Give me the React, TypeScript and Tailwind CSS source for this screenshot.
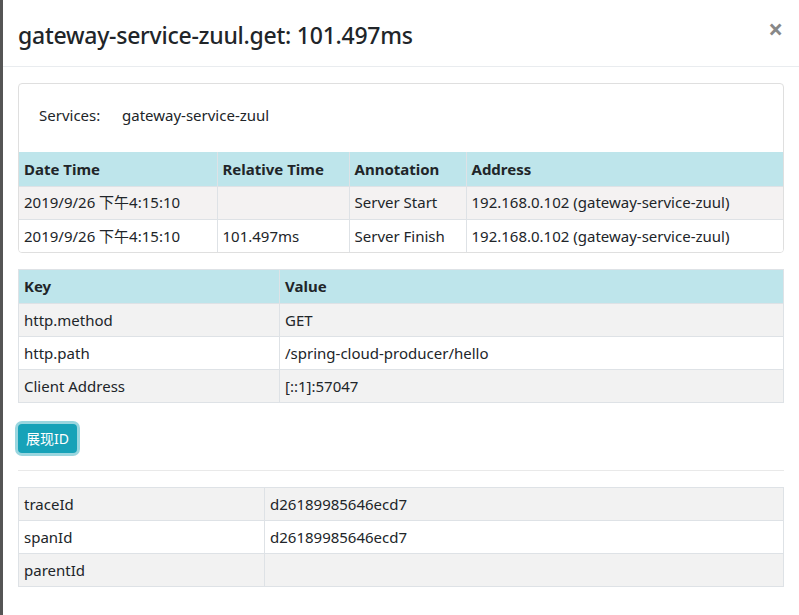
import React from 'react';

const font = { fontFamily: '"Noto Sans", "Noto Sans CJK SC", sans-serif' };

const spans = [
    { time: '2019/9/26 下午4:15:10', rel: '', ann: 'Server Start', addr: '192.168.0.102 (gateway-service-zuul)' },
    { time: '2019/9/26 下午4:15:10', rel: '101.497ms', ann: 'Server Finish', addr: '192.168.0.102 (gateway-service-zuul)' },
];

const tags = [
    ['http.method', 'GET'],
    ['http.path', '/spring-cloud-producer/hello'],
    ['Client Address', '[::1]:57047'],
];

const ids = [
    ['traceId', 'd26189985646ecd7'],
    ['spanId', 'd26189985646ecd7'],
    ['parentId', ''],
];

const cell = 'px-[5px] h-[33px] border-r border-[#dee2e6] last:border-r-0 align-middle';

export default function App() {
    return (
        <div className="w-[799px] h-[615px] overflow-hidden bg-[#555] flex" style={font}>
            <div className="ml-[3px] flex-1 bg-white text-[15px] text-[#212529]">
                {/* header */}
                <div className="h-[67px] px-[15px] flex items-center justify-between border-b border-[#e9ecef]">
                    <h4 className="text-[23px] font-medium text-[#212529] leading-none mt-[4px] tracking-[-0.25px]">gateway-service-zuul.get: 101.497ms</h4>
                    <span className="text-[26px] font-bold text-[#888] leading-none mr-[1px] -mt-[8px]">×</span>
                </div>

                {/* body */}
                <div className="px-[15px] pt-[16px]">
                    <div className="border border-[#dfdfdf] rounded-[4px] overflow-hidden">
                        <div className="h-[68px] px-[20px] pb-[6px] flex items-center">
                            <span className="w-[83px]">Services:</span>
                            <span>gateway-service-zuul</span>
                        </div>
                        <table className="w-full border-collapse text-left">
                            <thead>
                                <tr className="bg-[#bee5eb] h-[34px]">
                                    <th className={`${cell} w-[198px] font-bold`}>Date Time</th>
                                    <th className={`${cell} w-[132px] font-bold`}>Relative Time</th>
                                    <th className={`${cell} w-[117px] font-bold`}>Annotation</th>
                                    <th className={`${cell} font-bold`}>Address</th>
                                </tr>
                            </thead>
                            <tbody>
                                {spans.map((s, i) => (
                                    <tr key={i} className={`border-t border-[#dee2e6] ${i % 2 === 0 ? 'bg-[#f4f2f2]' : 'bg-white'}`}>
                                        <td className={cell}>{s.time}</td>
                                        <td className={cell}>{s.rel}</td>
                                        <td className={cell}>{s.ann}</td>
                                        <td className={cell}>{s.addr}</td>
                                    </tr>
                                ))}
                            </tbody>
                        </table>
                    </div>

                    <table className="w-full border-collapse text-left mt-[16px] border border-[#dee2e6]">
                        <thead>
                            <tr className="bg-[#bee5eb] h-[34px]">
                                <th className={`${cell} w-[261px] font-bold`}>Key</th>
                                <th className={`${cell} font-bold`}>Value</th>
                            </tr>
                        </thead>
                        <tbody>
                            {tags.map(([k, v], i) => (
                                <tr key={k} className={`border-t border-[#dee2e6] ${i % 2 === 0 ? 'bg-[#f2f2f2]' : 'bg-white'}`}>
                                    <td className={cell}>{k}</td>
                                    <td className={cell}>{v}</td>
                                </tr>
                            ))}
                        </tbody>
                    </table>

                    <button className="block mt-[21px] h-[29px] px-[8px] rounded-[4px] bg-[#17a2b8] text-white text-[14px] ring-[3px] ring-[#9ad6df]">
                        展现ID
                    </button>

                    <hr className="mt-[17px] border-0 border-t border-[#e9e9e9]" />

                    <table className="w-full border-collapse text-left mt-[16px] border border-[#dee2e6]">
                        <tbody>
                            {ids.map(([k, v], i) => (
                                <tr key={k} className={`${i > 0 ? 'border-t border-[#dee2e6]' : ''} ${i % 2 === 0 ? 'bg-[#f2f2f2]' : 'bg-white'}`}>
                                    <td className={`${cell} w-[246px]`}>{k}</td>
                                    <td className={cell}>{v}</td>
                                </tr>
                            ))}
                        </tbody>
                    </table>
                </div>
            </div>
        </div>
    );
}
